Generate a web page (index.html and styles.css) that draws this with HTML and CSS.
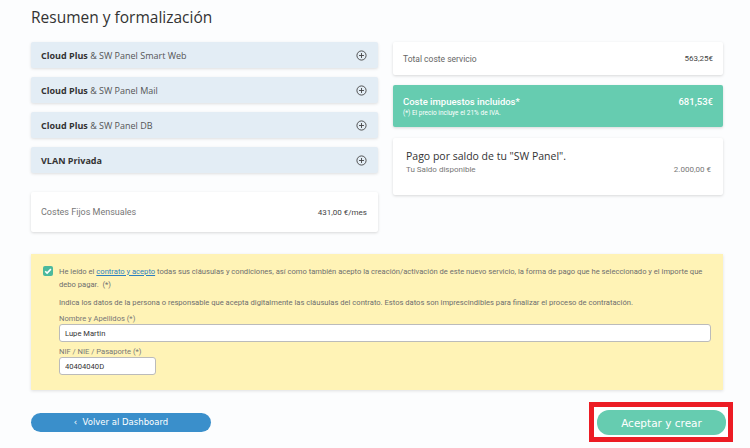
FILE: index.html
```html
<!DOCTYPE html>
<html lang="es">
<head>
    <meta charset="UTF-8">
    <title>Resumen y formalización</title>
    <link rel="stylesheet" href="styles.css">
</head>
<body>
    <div class="page">
        <h1>Resumen y formalización</h1>

        <div class="summary">
            <div class="left-col">
                <div class="acc-item"><span><b>Cloud Plus</b> &amp; SW Panel Smart Web</span><svg class="plus" viewBox="0 0 12 12"><circle cx="6" cy="6" r="5" fill="none" stroke="#444" stroke-width="1"/><path d="M6 3.3v5.4M3.3 6h5.4" stroke="#444" stroke-width="1"/></svg></div>
                <div class="acc-item"><span><b>Cloud Plus</b> &amp; SW Panel Mail</span><svg class="plus" viewBox="0 0 12 12"><circle cx="6" cy="6" r="5" fill="none" stroke="#444" stroke-width="1"/><path d="M6 3.3v5.4M3.3 6h5.4" stroke="#444" stroke-width="1"/></svg></div>
                <div class="acc-item"><span><b>Cloud Plus</b> &amp; SW Panel DB</span><svg class="plus" viewBox="0 0 12 12"><circle cx="6" cy="6" r="5" fill="none" stroke="#444" stroke-width="1"/><path d="M6 3.3v5.4M3.3 6h5.4" stroke="#444" stroke-width="1"/></svg></div>
                <div class="acc-item"><span><b>VLAN Privada</b></span><svg class="plus" viewBox="0 0 12 12"><circle cx="6" cy="6" r="5" fill="none" stroke="#444" stroke-width="1"/><path d="M6 3.3v5.4M3.3 6h5.4" stroke="#444" stroke-width="1"/></svg></div>

                <div class="card fixed">
                    <span>Costes Fijos Mensuales</span>
                    <span class="amount">431,00 €/mes</span>
                </div>
            </div>

            <div class="right-col">
                <div class="card total">
                    <span>Total coste servicio</span>
                    <span class="amount">563,25€</span>
                </div>
                <div class="card taxes">
                    <div class="row">
                        <span>Coste impuestos incluidos*</span>
                        <span>681,53€</span>
                    </div>
                    <div class="note">(*) El precio incluye el 21% de IVA.</div>
                </div>
                <div class="card balance">
                    <div class="balance-title">Pago por saldo de tu "SW Panel".</div>
                    <div class="row">
                        <span>Tu Saldo disponible</span>
                        <span>2.000,00 €</span>
                    </div>
                </div>
            </div>
        </div>

        <div class="terms">
            <div class="accept">
                <span class="check"><svg viewBox="0 0 10 10"><path d="M2.2 5.2l1.9 1.9 3.8-4" fill="none" stroke="#fff" stroke-width="1.6"/></svg></span>
                <p>He leído el <a href="#">contrato y acepto</a> todas sus cláusulas y condiciones, así como también acepto la creación/activación de este nuevo servicio, la forma de pago que he seleccionado y el importe que debo pagar.&nbsp; (*)</p>
            </div>
            <p class="info">Indica los datos de la persona o responsable que acepta digitalmente las cláusulas del contrato. Estos datos son imprescindibles para finalizar el proceso de contratación.</p>
            <label for="fullName" class="first">Nombre y Apellidos (*)</label>
            <input type="text" id="fullName" class="field wide" value="Lupe Martin">
            <label for="nif" class="second">NIF / NIE / Pasaporte (*)</label>
            <input type="text" id="nif" class="field short" value="40404040D">
        </div>

        <div class="actions">
            <button class="btn back">&lsaquo;&nbsp; Volver al Dashboard</button>
            <div class="highlight">
                <button class="btn create">Aceptar y crear</button>
            </div>
        </div>
    </div>
</body>
</html>
```

FILE: styles.css
```css
body {
    margin: 0;
    background: #fcfdfe;
    font-family: Roboto, "Liberation Sans", sans-serif;
    color: #555;
}
.page {
    width: 692px;
    padding: 7px 0 0 31px;
}
h1 {
    font-family: "Open Sans", sans-serif;
    font-weight: 400;
    font-size: 15.5px;
    line-height: 20px;
    color: #333;
    margin: 0 0 15px;
}
.summary {
    display: grid;
    grid-template-columns: 347px 330px;
    gap: 15px;
}
.left-col,
.right-col {
    display: flex;
    flex-direction: column;
}
.acc-item {
    height: 26px;
    background: #e3edf5;
    border-radius: 2px;
    box-shadow: 0 1px 3px rgba(0, 0, 0, 0.12);
    margin-bottom: 9px;
    padding: 0 11px 0 10px;
    display: flex;
    align-items: center;
    justify-content: space-between;
    font-family: "Open Sans", sans-serif;
    font-size: 9px;
    color: #555;
}
.acc-item b {
    color: #333;
    font-weight: 700;
}
.plus {
    width: 11px;
    height: 11px;
}
.card {
    background: #fff;
    border-radius: 2px;
    box-shadow: 0 1px 3px rgba(0, 0, 0, 0.15);
    box-sizing: border-box;
}
.fixed {
    margin-top: 10px;
    height: 40px;
    padding: 0 11px 0 10px;
    display: flex;
    align-items: center;
    justify-content: space-between;
    font-size: 9px;
    color: #777;
}
.fixed .amount {
    font-size: 8px;
    color: #444;
}
.total {
    height: 33px;
    padding: 0 10px;
    display: flex;
    align-items: center;
    justify-content: space-between;
    font-size: 8.5px;
    color: #666;
}
.total .amount {
    font-size: 8px;
    color: #444;
}
.taxes {
    margin-top: 10px;
    height: 42px;
    background: #66ccb0;
    color: #fff;
    padding: 11px 10px 0;
}
.row {
    display: flex;
    justify-content: space-between;
}
.taxes .row {
    font-size: 9.5px;
    font-weight: 500;
    line-height: 12px;
}
.note {
    font-size: 6.5px;
    line-height: 10px;
}
.balance {
    margin-top: 11px;
    height: 57px;
    padding: 11px 12px 0 13px;
}
.balance-title {
    font-family: "Open Sans", sans-serif;
    font-size: 10.5px;
    color: #333;
    line-height: 14px;
}
.balance .row {
    font-size: 8px;
    color: #777;
    line-height: 13px;
}
.terms {
    margin-top: 22px;
    height: 136px;
    box-sizing: border-box;
    background: #fff3b6;
    box-shadow: 0 1px 3px rgba(0, 0, 0, 0.12);
    padding: 11px 12px 0 12px;
    font-size: 7.6px;
    color: #6e6e6e;
}
.accept {
    display: flex;
    gap: 6px;
}
.check {
    flex: none;
    width: 10px;
    height: 10px;
    margin-top: 1px;
    background: #4bb99d;
    border-radius: 2px;
    display: flex;
}
.check svg {
    width: 10px;
    height: 10px;
}
.accept p {
    margin: 0;
    line-height: 13px;
}
.accept a {
    color: #2c7fc0;
}
.info {
    margin: 6px 0 0 16px;
    line-height: 11px;
}
.terms label {
    display: block;
    margin-left: 16px;
    line-height: 10px;
    color: #777;
}
.terms .first {
    margin-top: 6px;
}
.terms .second {
    margin-top: 5px;
}
.field {
    display: block;
    box-sizing: border-box;
    margin: 0 0 0 16px;
    height: 18px;
    border: 1px solid #bbb;
    border-radius: 3px;
    background: #fff;
    font-family: Roboto, sans-serif;
    font-size: 7.6px;
    color: #333;
    padding: 0 5px;
}
.wide {
    width: 652px;
}
.short {
    width: 97px;
}
.actions {
    margin-top: 12px;
    display: flex;
    justify-content: space-between;
    align-items: center;
    width: 702px;
}
.btn {
    border: none;
    border-radius: 12px;
    color: #fff;
    font-family: "DejaVu Sans", Verdana, sans-serif;
    cursor: pointer;
}
.back {
    width: 180px;
    height: 19px;
    background: #3a8fcb;
    font-size: 8.5px;
}
.highlight {
    border: 5px solid #ec1c24;
    padding: 3px 2px 2px 3px;
    background: #fff;
}
.create {
    display: block;
    width: 129px;
    height: 25px;
    background: #66ccb0;
    font-size: 10.5px;
}
```
